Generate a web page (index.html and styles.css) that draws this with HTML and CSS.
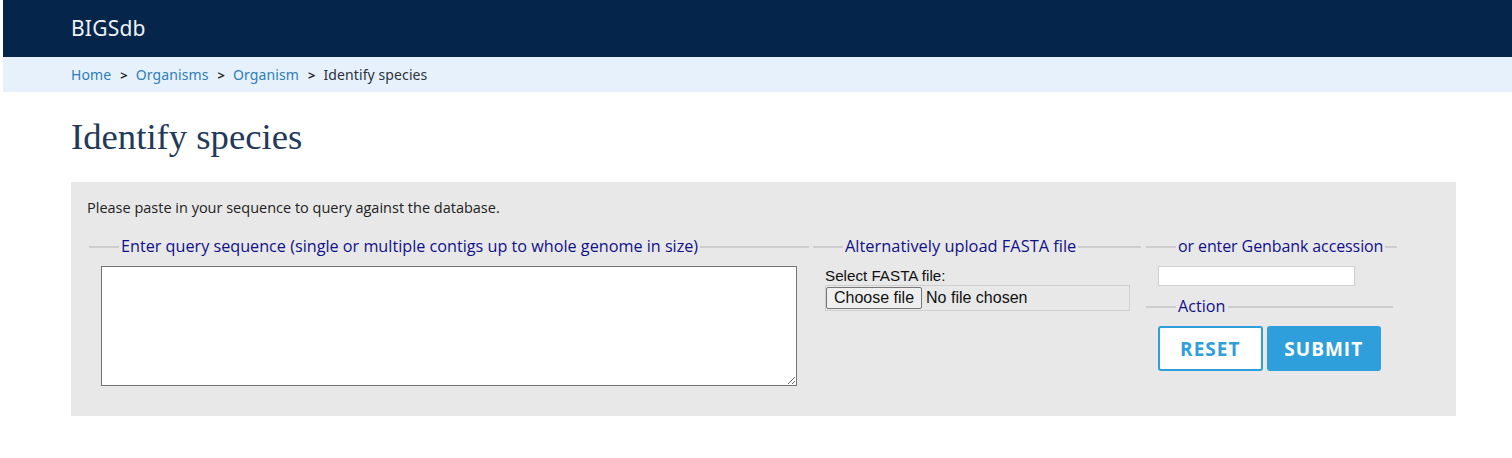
FILE: index.html
```html
<!DOCTYPE html>
<html lang="en">
<head>
<meta charset="utf-8">
<title>Identify species - BIGSdb</title>
<link rel="stylesheet" href="styles.css">
</head>
<body>
<div class="page">
  <header class="topbar">
    <div class="brand">BIGSdb</div>
  </header>
  <nav class="crumbs">
    <a href="#">Home</a><span class="sep">&gt;</span><a href="#">Organisms</a><span class="sep">&gt;</span><a href="#">Organism</a><span class="sep">&gt;</span><span class="current">Identify species</span>
  </nav>
</div>
<main class="main">
  <h1 class="title">Identify species</h1>
  <div class="box">
    <p class="intro">Please paste in your sequence to query against the database.</p>
    <div class="row">
      <fieldset class="fs fs-seq">
        <legend>Enter query sequence (single or multiple contigs up to whole genome in size)</legend>
        <textarea class="seq"></textarea>
      </fieldset>
      <fieldset class="fs fs-file">
        <legend>Alternatively upload FASTA file</legend>
        <div class="file-label">Select FASTA file:</div>
        <label class="file-box">
          <input type="file" class="file-input">
          <span class="choose">Choose file</span>
          <span class="none">No file chosen</span>
        </label>
      </fieldset>
      <div class="col3">
        <fieldset class="fs fs-acc">
          <legend>or enter Genbank accession</legend>
          <input type="text" class="acc">
        </fieldset>
        <fieldset class="fs fs-action">
          <legend>Action</legend>
          <div class="buttons">
            <button class="btn reset" type="button">RESET</button>
            <button class="btn submit" type="button">SUBMIT</button>
          </div>
        </fieldset>
      </div>
    </div>
  </div>
</main>
</body>
</html>
```
FILE: styles.css
```css
html, body {
  margin: 0;
  padding: 0;
  background: #fff;
}
body {
  font-family: "Noto Sans", "Open Sans", sans-serif;
}
.page {
  margin-left: 3px;
}
.topbar {
  background: #05264a;
  height: 57px;
  display: flex;
  align-items: center;
  padding-left: 68px;
}
.brand {
  color: #eef2f7;
  font-size: 21px;
  letter-spacing: 0.2px;
  margin-top: -1px;
}
.crumbs {
  background: #e6f1fc;
  height: 35px;
  display: flex;
  align-items: center;
  padding-left: 68px;
  font-size: 14px;
  letter-spacing: 0.1px;
}
.crumbs a {
  color: #2f7db8;
  text-decoration: none;
}
.crumbs .sep {
  color: #222;
  font-weight: bold;
  margin: 0 8px 0 9px;
  font-size: 13px;
}
.crumbs .current {
  color: #2b3340;
}
.main {
  padding: 0 56px 0 71px;
}
.title {
  font-family: "Liberation Serif", "Times New Roman", serif;
  font-weight: normal;
  font-size: 36.7px;
  color: #22395a;
  margin: 0;
  padding-top: 24px;
  height: 66px;
  line-height: 42px;
}
.box {
  background: #e8e8e8;
  height: 234px;
  box-sizing: border-box;
  padding: 17px 16px 0 16px;
  font-family: "Open Sans", "Noto Sans", sans-serif;
}
.intro {
  margin: 0 0 19px 0;
  font-size: 14.5px;
  color: #222;
  line-height: 18px;
}
.row {
  display: flex;
  align-items: flex-start;
}
.fs {
  margin: 0 2px;
  border: none;
  border-top: 2px solid #cdcdcd;
  padding: 8px 12px 0 12px;
  box-sizing: border-box;
  min-width: 0;
}
.fs legend {
  margin-left: 18px;
  padding: 0 2px;
  color: #10108a;
  font-size: 16.2px;
  line-height: 22px;
  white-space: nowrap;
  position: relative;
  top: -1px;
}
.fs-seq { width: 720px; }
.fs-file { width: 328px; }
.fs-file legend { font-size: 16.4px; }
.col3 { margin-left: 1px; }
.fs-acc { width: 251px; }
.fs-acc legend { font-size: 16px; letter-spacing: -0.1px; }
.fs-action { width: 247px; margin-top: 10px; padding-top: 8px; }
.seq {
  display: block;
  width: 696px;
  height: 120px;
  box-sizing: border-box;
  border: 1px solid #767676;
  border-radius: 0;
  margin: 0;
  resize: vertical;
  background: #fff;
}
.file-label {
  font-family: "Liberation Sans", Arial, sans-serif;
  font-size: 15.2px;
  color: #111;
  margin-top: 1px;
  line-height: 18px;
}
.file-box {
  width: 305px;
  height: 26px;
  box-sizing: border-box;
  border: 1px solid #cfcfcf;
  display: flex;
  align-items: center;
  position: relative;
  font-family: "Liberation Sans", Arial, sans-serif;
  font-size: 16px;
  color: #111;
}
.file-input {
  position: absolute;
  width: 1px;
  height: 1px;
  opacity: 0;
  overflow: hidden;
}
.choose {
  height: 22px;
  box-sizing: border-box;
  padding: 0 7px;
  background: #efefef;
  border: 1px solid #767676;
  border-radius: 2px;
  line-height: 20px;
  display: flex;
  align-items: center;
}
.none {
  margin-left: 4px;
}
.acc {
  display: block;
  width: 197px;
  height: 20px;
  box-sizing: border-box;
  border: 1px solid #cfcfcf;
  background: #fff;
  margin: 0;
  padding: 0 3px;
}
.buttons {
  display: flex;
  gap: 4px;
}
.btn {
  font-family: "Open Sans", "Noto Sans", sans-serif;
  font-stretch: 88%;
  font-weight: bold;
  font-size: 19px;
  letter-spacing: 1px;
  height: 45px;
  border-radius: 3px;
  box-sizing: border-box;
  cursor: pointer;
  margin: 0;
  padding: 0;
}
.reset {
  width: 105px;
  background: #fff;
  color: #2f9fdb;
  border: 2px solid #2f9fdb;
}
.submit {
  width: 115px;
  background: #2f9fdb;
  color: #fff;
  border: 2px solid #2f9fdb;
}
```
